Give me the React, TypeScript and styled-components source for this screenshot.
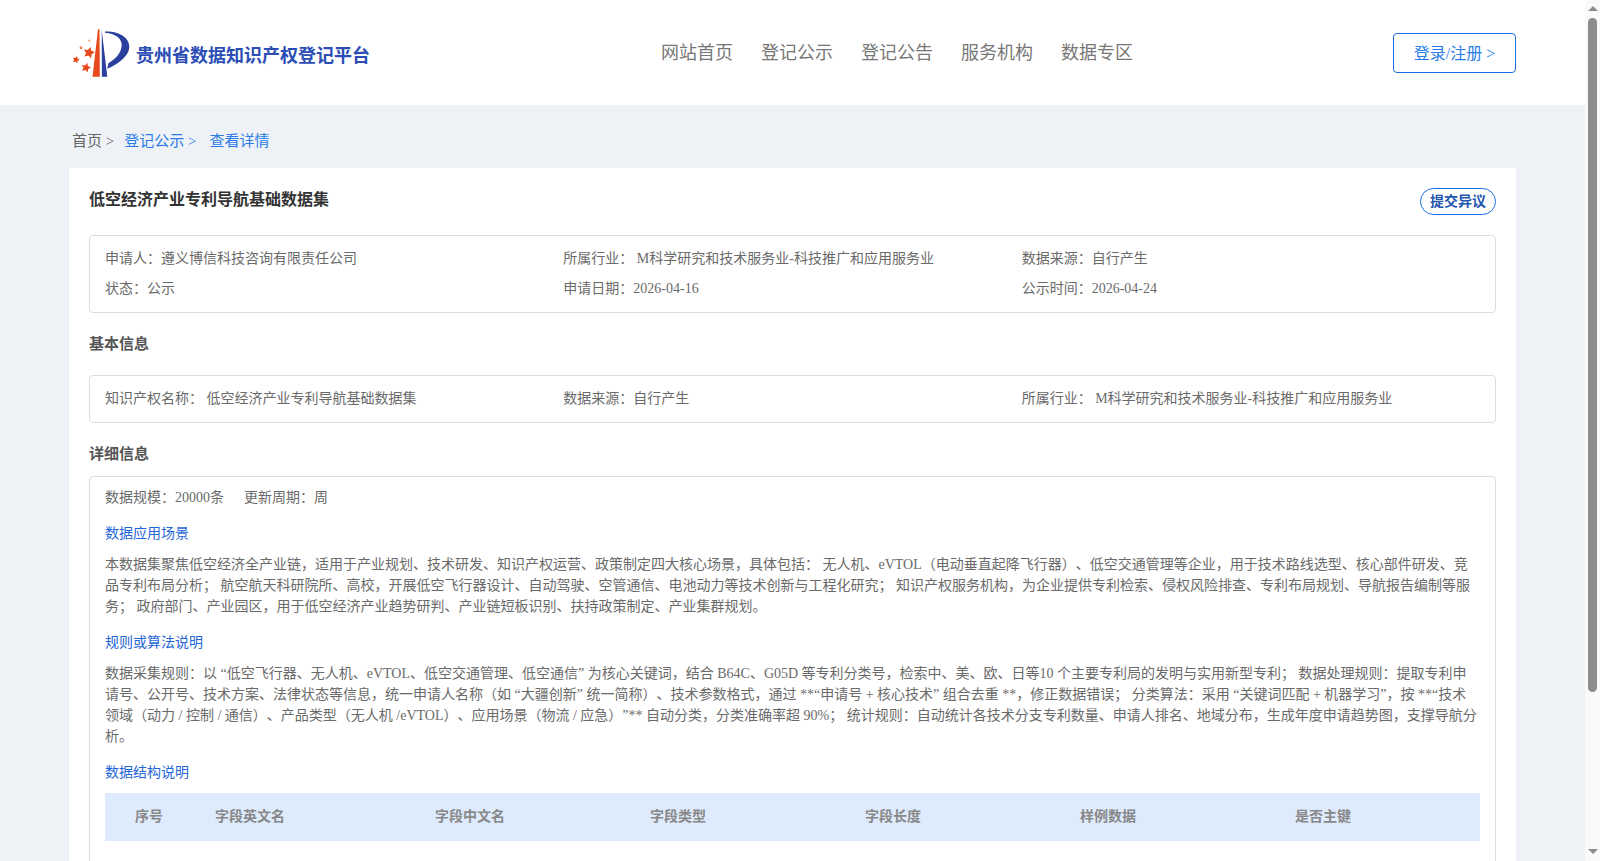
import React from 'react';
import styled, { createGlobalStyle } from 'styled-components';

const GlobalStyle = createGlobalStyle`
  html, body {
    margin: 0;
    padding: 0;
    height: 100%;
    overflow: hidden;
    background: #eef2f6;
  }
  body {
    font-family: "Liberation Serif", "Noto Sans CJK SC", serif;
    font-size: 14px;
    color: #6a6a6a;
    text-spacing-trim: space-all;
  }
  * {
    box-sizing: border-box;
  }
`;

const Shell = styled.div`
  display: flex;
  height: 100vh;
`;

const Page = styled.div`
  flex: 1;
  min-width: 0;
  overflow-y: auto;
  scrollbar-width: none;
`;

const ScrollBar = styled.div`
  width: 15px;
  flex: none;
  background: #fafafa;
  display: flex;
  flex-direction: column;
  align-items: center;
`;

const ArrowUp = styled.span`
  margin-top: 6px;
  border-left: 5px solid transparent;
  border-right: 5px solid transparent;
  border-bottom: 5px solid #8c8c8c;
`;

const Thumb = styled.div`
  width: 9px;
  height: 674px;
  margin-top: 7px;
  background: #8c8c8c;
  border-radius: 5px;
`;

const ArrowDown = styled.span`
  margin-top: auto;
  margin-bottom: 7px;
  border-left: 5px solid transparent;
  border-right: 5px solid transparent;
  border-top: 5px solid #8c8c8c;
`;

const Header = styled.header`
  height: 105px;
  background: #fff;
  display: flex;
  align-items: center;
  padding: 0 69px 0 68px;
`;

const Brand = styled.div`
  display: flex;
  align-items: center;
  gap: 2px;
`;

const BrandName = styled.span`
  font-size: 18px;
  font-weight: 700;
  color: #2b4db5;
  margin-top: 3px;
`;

const Nav = styled.nav`
  display: flex;
  gap: 28px;
  margin-left: 291px;
`;

const NavItem = styled.a`
  font-size: 18px;
  color: #777;
  line-height: 24px;
  margin-top: 1px;
`;

const LoginButton = styled.button`
  margin-left: auto;
  width: 123px;
  height: 40px;
  padding: 0 0 2px;
  background: #fff;
  border: 1px solid #1a6fe8;
  border-radius: 4px;
  color: #2a7be8;
  font: inherit;
  font-size: 16px;
`;

const Main = styled.main`
  padding: 0 69px;
`;

const Breadcrumb = styled.div`
  display: flex;
  height: 63px;
  align-items: center;
  padding: 5px 0 0 3px;
  font-size: 15px;
  gap: 10px;
`;

const Crumb = styled.span<{ $active?: boolean; $wide?: boolean }>`
  color: ${({ $active }) => ($active ? '#2a7be8' : '#666')};
  margin-right: ${({ $wide }) => ($wide ? '3px' : '0')};
`;

const Card = styled.section`
  background: #fff;
  padding: 20px 20px 44px;
`;

const TitleRow = styled.div`
  display: flex;
  justify-content: space-between;
  align-items: flex-start;
  height: 47px;
`;

const Title = styled.h1`
  margin: 0;
  font-size: 16px;
  line-height: 24px;
  font-weight: 700;
  color: #333;
`;

const ObjectionButton = styled.button`
  width: 76px;
  height: 27px;
  padding: 0 0 3px;
  background: #fff;
  border: 1px solid #1a6fe8;
  border-radius: 14px;
  color: #2255b0;
  font: inherit;
  font-size: 14px;
  font-weight: 700;
`;

const InfoBox = styled.div`
  border: 1px solid #ddd;
  border-radius: 4px;
  padding: 12px 15px 13px;
  display: grid;
  grid-template-columns: repeat(3, 1fr);
  row-gap: 9px;
  line-height: 21px;
`;

const InfoItem = styled.div`
  white-space: nowrap;
`;

const SectionTitle = styled.h2<{ $top: number }>`
  margin: ${({ $top }) => $top}px 0 0;
  font-size: 15px;
  line-height: 22px;
  font-weight: 700;
  color: #555;
`;

const BasicBox = styled(InfoBox)`
  margin-top: 20px;
  padding: 12px 15px 13px;
  height: 48px;
`;

const DetailBox = styled.div`
  margin-top: 11px;
  border: 1px solid #ddd;
  border-radius: 4px;
  padding: 10px 15px 0;
  line-height: 21px;
  min-height: 534px;
`;

const Meta = styled.div`
  display: flex;
  gap: 20px;
`;

const SubHeading = styled.div`
  color: #1f66d8;
  margin-top: 15px;
`;

const Paragraph = styled.p`
  margin: 10px 0 0;
`;

const TableHead = styled.div`
  margin-top: 10px;
  height: 48px;
  background: #deebfd;
  display: grid;
  grid-template-columns: 80px 220px repeat(5, 215px);
  align-items: center;
  padding: 0 0 1px 30px;
  font-weight: 700;
  color: #888;
`;

const fields = ['序号', '字段英文名', '字段中文名', '字段类型', '字段长度', '样例数据', '是否主键'];

const starPoints = (cx: number, cy: number, r: number) => {
  const pts: string[] = [];
  for (let i = 0; i < 10; i++) {
    const rad = i % 2 === 0 ? r : r * 0.5;
    const a = -Math.PI / 2 + (i * Math.PI) / 5 + 0.25;
    pts.push(`${(cx + rad * Math.cos(a)).toFixed(2)},${(cy + rad * Math.sin(a)).toFixed(2)}`);
  }
  return pts.join(' ');
};

const Logo = () => (
  <svg width="66" height="56" viewBox="0 0 66 56">
    <path d="M30 4.3 L31.5 4.3 L31.8 51.7 L24.5 51.7 Z" fill="#e8481c" />
    <path d="M33.7 5 L33.9 51.7 L39.3 51.7 Z" fill="#2a3f9e" />
    <path
      d="M37 6.5 C50 6 61.3 12 61.3 21.7 C61.3 31 50 39 39.3 43.8 L40.3 38.3 C48 34 53.7 27 53.7 20 C53.7 13 47 8.5 37 7.7 Z"
      fill="#2a3f9e"
    />
    <polygon points={starPoints(21, 27.7, 6)} fill="#e8481c" />
    <polygon points={starPoints(8, 34.7, 3.8)} fill="#e8481c" />
    <polygon points={starPoints(18, 42.7, 5)} fill="#e8481c" />
    <circle cx="13" cy="22.7" r="1.5" fill="#f0805c" />
    <circle cx="21.3" cy="15.7" r="1.1" fill="#f0a080" />
  </svg>
);

const App: React.FC = () => {
  return (
    <Shell>
      <GlobalStyle />
      <Page>
        <Header>
          <Brand>
            <Logo />
            <BrandName>贵州省数据知识产权登记平台</BrandName>
          </Brand>
          <Nav>
            {['网站首页', '登记公示', '登记公告', '服务机构', '数据专区'].map((item) => (
              <NavItem key={item}>{item}</NavItem>
            ))}
          </Nav>
          <LoginButton>登录/注册 &gt;</LoginButton>
        </Header>
        <Main>
          <Breadcrumb>
            <Crumb>首页 &gt;</Crumb>
            <Crumb $active $wide>登记公示 &gt;</Crumb>
            <Crumb $active>查看详情</Crumb>
          </Breadcrumb>
          <Card>
            <TitleRow>
              <Title>低空经济产业专利导航基础数据集</Title>
              <ObjectionButton>提交异议</ObjectionButton>
            </TitleRow>
            <InfoBox>
              <InfoItem>申请人：遵义博信科技咨询有限责任公司</InfoItem>
              <InfoItem>所属行业： M科学研究和技术服务业-科技推广和应用服务业</InfoItem>
              <InfoItem>数据来源：自行产生</InfoItem>
              <InfoItem>状态：公示</InfoItem>
              <InfoItem>申请日期：2026-04-16</InfoItem>
              <InfoItem>公示时间：2026-04-24</InfoItem>
            </InfoBox>
            <SectionTitle $top={20}>基本信息</SectionTitle>
            <BasicBox>
              <InfoItem>知识产权名称： 低空经济产业专利导航基础数据集</InfoItem>
              <InfoItem>数据来源：自行产生</InfoItem>
              <InfoItem>所属行业： M科学研究和技术服务业-科技推广和应用服务业</InfoItem>
            </BasicBox>
            <SectionTitle $top={20}>详细信息</SectionTitle>
            <DetailBox>
              <Meta>
                <span>数据规模：20000条</span>
                <span>更新周期：周</span>
              </Meta>
              <SubHeading>数据应用场景</SubHeading>
              <Paragraph>
                本数据集聚焦低空经济全产业链，适用于产业规划、技术研发、知识产权运营、政策制定四大核心场景，具体包括： 无人机、eVTOL（电动垂直起降飞行器）、低空交通管理等企业，用于技术路线选型、核心部件研发、竞品专利布局分析； 航空航天科研院所、高校，开展低空飞行器设计、自动驾驶、空管通信、电池动力等技术创新与工程化研究； 知识产权服务机构，为企业提供专利检索、侵权风险排查、专利布局规划、导航报告编制等服务； 政府部门、产业园区，用于低空经济产业趋势研判、产业链短板识别、扶持政策制定、产业集群规划。
              </Paragraph>
              <SubHeading>规则或算法说明</SubHeading>
              <Paragraph>
                数据采集规则：以 “低空飞行器、无人机、eVTOL、低空交通管理、低空通信” 为核心关键词，结合 B64C、G05D 等专利分类号，检索中、美、欧、日等10 个主要专利局的发明与实用新型专利； 数据处理规则：提取专利申请号、公开号、技术方案、法律状态等信息，统一申请人名称（如 “大疆创新” 统一简称）、技术参数格式，通过 **“申请号 + 核心技术” 组合去重 **，修正数据错误； 分类算法：采用 “关键词匹配 + 机器学习”，按 **“技术领域（动力 / 控制 / 通信）、产品类型（无人机 /eVTOL）、应用场景（物流 / 应急）”** 自动分类，分类准确率超 90%； 统计规则：自动统计各技术分支专利数量、申请人排名、地域分布，生成年度申请趋势图，支撑导航分析。
              </Paragraph>
              <SubHeading>数据结构说明</SubHeading>
              <TableHead>
                {fields.map((f) => (
                  <span key={f}>{f}</span>
                ))}
              </TableHead>
            </DetailBox>
          </Card>
        </Main>
      </Page>
      <ScrollBar>
        <ArrowUp />
        <Thumb />
        <ArrowDown />
      </ScrollBar>
    </Shell>
  );
};

export default App;
